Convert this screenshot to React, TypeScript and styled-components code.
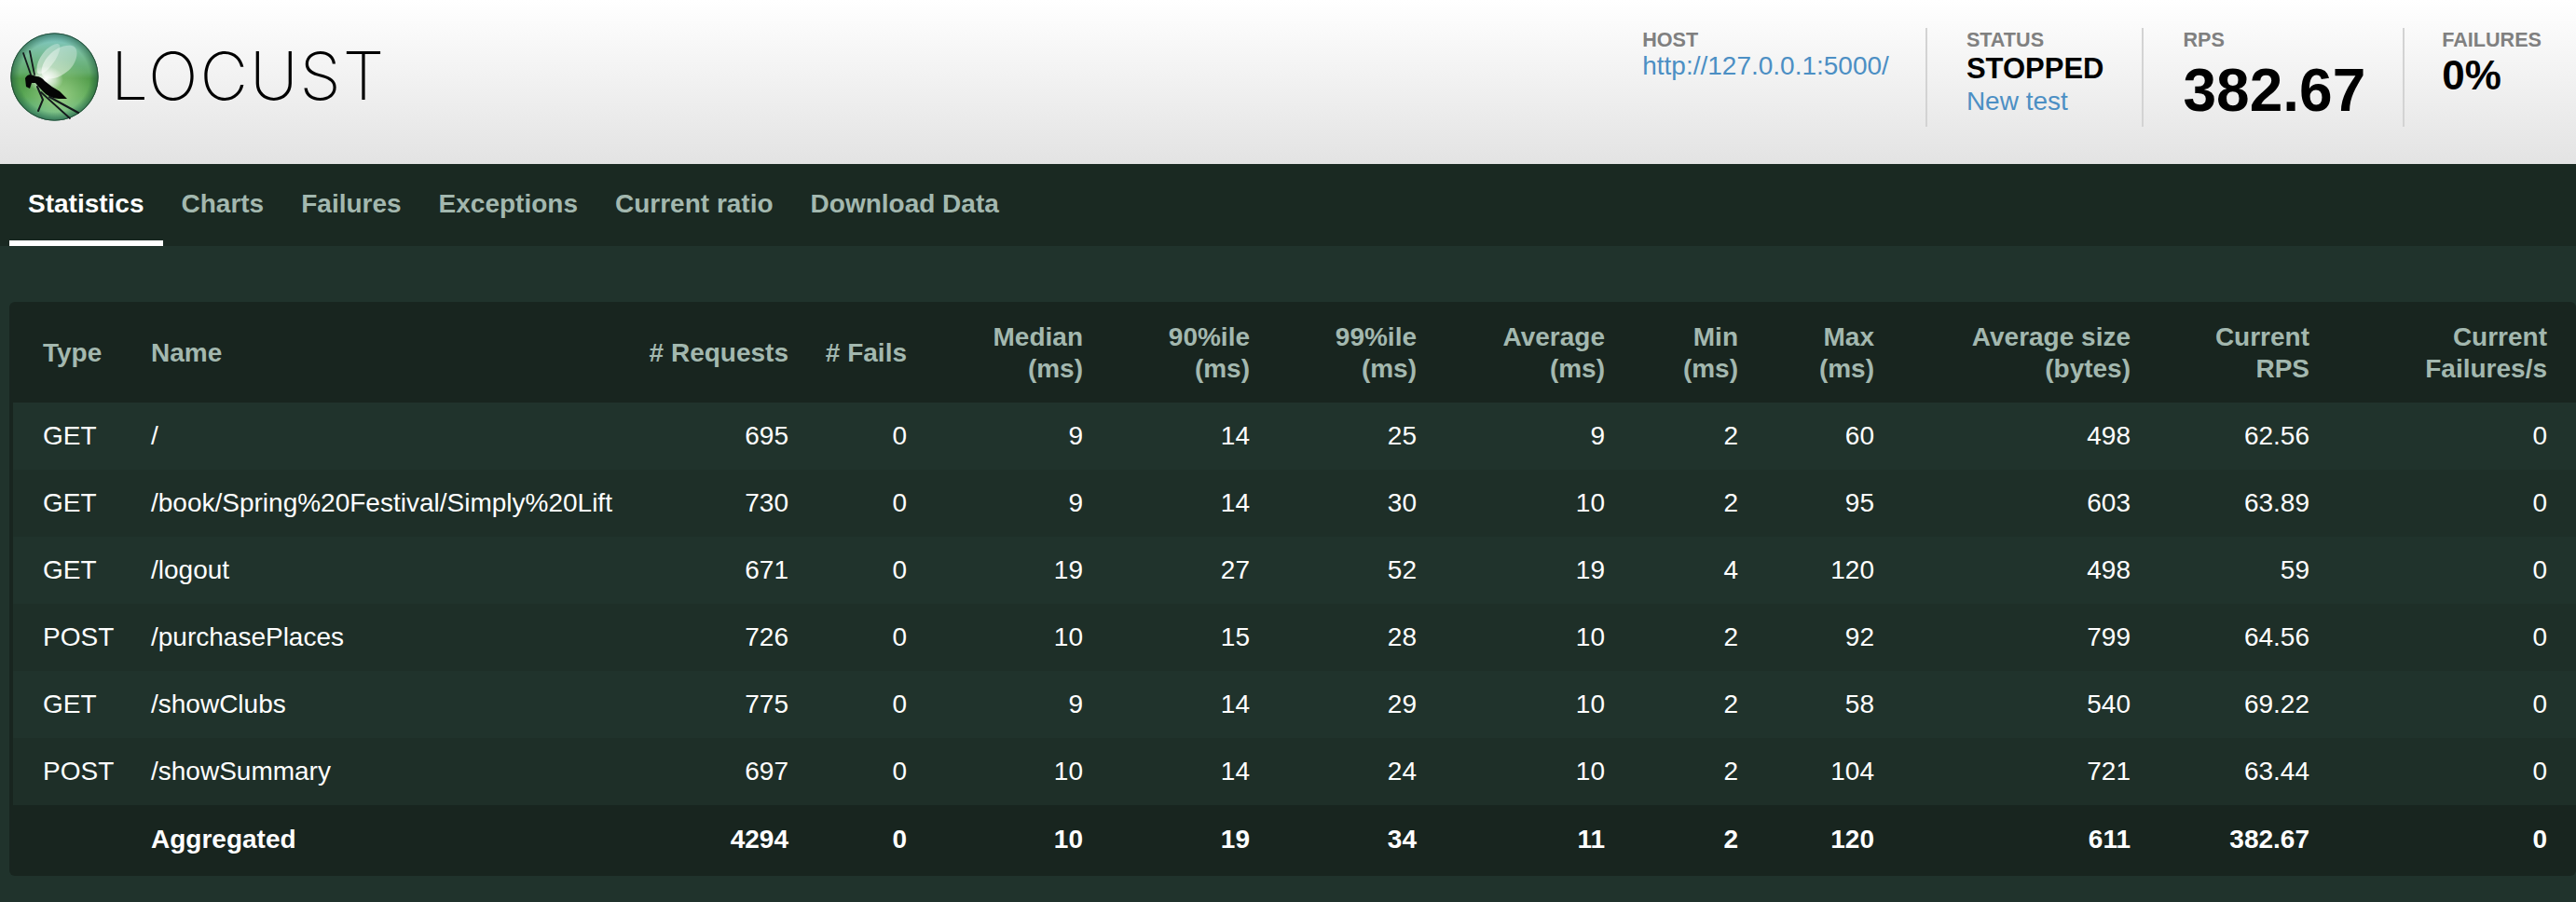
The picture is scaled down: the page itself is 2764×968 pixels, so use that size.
import React from "react";
import styled, { createGlobalStyle } from "styled-components";

const Global = createGlobalStyle`
  html, body { margin: 0; padding: 0; background: #20332c; }
  body { font-family: "Liberation Sans", Arial, sans-serif; }
  * { box-sizing: border-box; }
`;

const Page = styled.div`
  width: 2764px;
  height: 968px;
  overflow: hidden;
  background: #20332c;
`;

const Header = styled.header`
  height: 176px;
  display: flex;
  justify-content: space-between;
  background: linear-gradient(to bottom, #ffffff 0%, #e3e3e3 100%);
`;

const Brand = styled.div`
  display: flex;
  align-items: flex-start;
  padding: 35px 0 0 11px;
`;

const Wordmark = styled.span`
  margin: 3px 0 0 12px;
  font-family: "Inter", sans-serif;
  font-weight: 200;
  font-size: 71px;
  line-height: 86px;
  letter-spacing: 2px;
  color: #000;
`;

const Stats = styled.div`
  display: flex;
  align-items: flex-start;
  padding: 30px 37px 0 0;
`;

const Stat = styled.div<{ $left: number; $right: number; $last?: boolean }>`
  height: 106px;
  padding: 0 ${(p) => p.$right}px 0 ${(p) => p.$left}px;
  border-right: ${(p) => (p.$last ? "none" : "2px solid #d3d3d3")};
`;

const Label = styled.div`
  font-size: 21.6px;
  line-height: 24px;
  font-weight: 700;
  color: #808080;
  margin-top: 1px;
`;

const Link = styled.a`
  display: block;
  font-size: 28px;
  line-height: 32px;
  color: #4c8fc4;
`;

const StatusValue = styled.div`
  font-size: 31px;
  line-height: 38px;
  font-weight: 700;
  color: #000;
`;

const BigValue = styled.div<{ $size: number; $top: number }>`
  font-size: ${(p) => p.$size}px;
  line-height: ${(p) => p.$size + 4}px;
  margin-top: ${(p) => p.$top}px;
  font-weight: 700;
  color: #000;
`;

const Nav = styled.nav`
  height: 88px;
  display: flex;
  padding-left: 10px;
  background: #1a2922;
`;

const Tab = styled.a<{ $active?: boolean }>`
  display: block;
  height: 88px;
  padding: 0 20px;
  line-height: 86px;
  font-size: 28px;
  font-weight: 700;
  color: ${(p) => (p.$active ? "#ffffff" : "#a3b8af")};
  border-bottom: 6px solid ${(p) => (p.$active ? "#ffffff" : "transparent")};
`;

const Main = styled.main`
  padding: 60px 0 0 10px;
`;

const TableBox = styled.div`
  width: 2754px;
  height: 616px;
  padding-left: 4px;
  background: #18251f;
  border-radius: 6px;
  overflow: hidden;
`;

const Table = styled.table`
  width: 2750px;
  table-layout: fixed;
  border-collapse: collapse;
  font-size: 28px;
`;

const Col = styled.col<{ $w: number }>`
  width: ${(p) => p.$w}px;
`;

const HeadRow = styled.tr`
  height: 108px;
`;

const Th = styled.th<{ $left?: boolean; $first?: boolean }>`
  padding: 2px 31px 0 ${(p) => (p.$first ? 32 : 0)}px;
  line-height: 34px;
  font-weight: 700;
  white-space: nowrap;
  color: #a3b8af;
  text-align: ${(p) => (p.$left ? "left" : "right")};
`;

const Row = styled.tr<{ $alt: boolean }>`
  height: 72px;
  background: ${(p) => (p.$alt ? "#1e2f28" : "#20332c")};
`;

const TotalRow = styled.tr`
  height: 76px;
  font-weight: 700;
`;

const Td = styled.td<{ $left?: boolean; $first?: boolean }>`
  padding: 0 31px 0 ${(p) => (p.$first ? 32 : 0)}px;
  color: #ffffff;
  white-space: nowrap;
  text-align: ${(p) => (p.$left ? "left" : "right")};
`;

const TotalTd = styled(Td)`
  padding-bottom: 3px;
`;

const LogoMark = () => (
  <svg width="96" height="96" viewBox="0 0 96 96">
    <defs>
      <linearGradient id="ball" x1="0" y1="0" x2="0" y2="1">
        <stop offset="0%" stopColor="#7fc9cf" />
        <stop offset="18%" stopColor="#7cc0a4" />
        <stop offset="45%" stopColor="#63ab6a" />
        <stop offset="52%" stopColor="#4f9a48" />
        <stop offset="72%" stopColor="#58a654" />
        <stop offset="90%" stopColor="#5bb080" />
        <stop offset="100%" stopColor="#4aa28c" />
      </linearGradient>
      <radialGradient id="lower" cx="55%" cy="72%" r="42%">
        <stop offset="0%" stopColor="#9fd28a" stopOpacity="0.9" />
        <stop offset="100%" stopColor="#9fd28a" stopOpacity="0" />
      </radialGradient>
      <radialGradient id="rim" cx="50%" cy="50%" r="50%">
        <stop offset="80%" stopColor="#1e5a3c" stopOpacity="0" />
        <stop offset="100%" stopColor="#1e5a3c" stopOpacity="0.65" />
      </radialGradient>
      <radialGradient id="glow" cx="50%" cy="50%" r="50%">
        <stop offset="0%" stopColor="#ffffff" stopOpacity="1" />
        <stop offset="55%" stopColor="#ffffff" stopOpacity="0.55" />
        <stop offset="100%" stopColor="#ffffff" stopOpacity="0" />
      </radialGradient>
      <linearGradient id="wing" x1="0" y1="1" x2="1" y2="0">
        <stop offset="0%" stopColor="#ffffff" stopOpacity="0.95" />
        <stop offset="100%" stopColor="#ffffff" stopOpacity="0.4" />
      </linearGradient>
    </defs>
    <circle cx="47.5" cy="47.5" r="47" fill="url(#ball)" />
    <circle cx="47.5" cy="47.5" r="47" fill="url(#lower)" />
    <circle cx="47.5" cy="47.5" r="47" fill="url(#rim)" />
    <circle cx="47.5" cy="47.5" r="46.7" fill="none" stroke="#1f4030" strokeWidth="0.8" />
    <path d="M29 43 C 26 32 38 14 50 12 C 57 11 52 26 45 34 C 40 41 33 47 29 43 Z" fill="url(#wing)" opacity="0.6" />
    <path d="M34 45 C 31 32 48 12 66 14 C 76 16 72 36 58 44 C 50 50 38 52 34 45 Z" fill="url(#wing)" opacity="0.65" />
    <ellipse cx="38" cy="50" rx="19" ry="14" fill="url(#glow)" />
    <path d="M16 49 Q 18 45 22 45 L 28 47 Q 33 47 37 52 Q 45 59 53 63 L 61 71 L 52 71 Q 41 70 35 63 Q 30 58 27 54 L 23 54 L 21 60 L 17 58 Z" fill="#050505" />
    <g fill="none" stroke="#141a1c" strokeLinecap="round">
      <path d="M22 45 L 14 22" strokeWidth="1.8" />
      <path d="M26 45 L 21 20" strokeWidth="1.8" />
      <path d="M29 58 L 35 72 L 30 84" strokeWidth="2" />
      <path d="M33 64 L 64 92" strokeWidth="1.8" />
      <path d="M42 69 L 73 86" strokeWidth="2" />
    </g>
  </svg>
);

const columns = [148, 498, 217, 127, 189, 179, 179, 202, 143, 146, 275, 192, 255];
const heads: [string, string?][] = [
  ["Type"], ["Name"], ["# Requests"], ["# Fails"], ["Median", "(ms)"], ["90%ile", "(ms)"], ["99%ile", "(ms)"],
  ["Average", "(ms)"], ["Min", "(ms)"], ["Max", "(ms)"], ["Average size", "(bytes)"], ["Current", "RPS"], ["Current", "Failures/s"],
];
const rows = [
  ["GET", "/", "695", "0", "9", "14", "25", "9", "2", "60", "498", "62.56", "0"],
  ["GET", "/book/Spring%20Festival/Simply%20Lift", "730", "0", "9", "14", "30", "10", "2", "95", "603", "63.89", "0"],
  ["GET", "/logout", "671", "0", "19", "27", "52", "19", "4", "120", "498", "59", "0"],
  ["POST", "/purchasePlaces", "726", "0", "10", "15", "28", "10", "2", "92", "799", "64.56", "0"],
  ["GET", "/showClubs", "775", "0", "9", "14", "29", "10", "2", "58", "540", "69.22", "0"],
  ["POST", "/showSummary", "697", "0", "10", "14", "24", "10", "2", "104", "721", "63.44", "0"],
];
const total = ["", "Aggregated", "4294", "0", "10", "19", "34", "11", "2", "120", "611", "382.67", "0"];
const tabs = ["Statistics", "Charts", "Failures", "Exceptions", "Current ratio", "Download Data"];

export default function App() {
  return (
    <Page>
      <Global />
      <Header>
        <Brand>
          <LogoMark />
          <Wordmark>LOCUST</Wordmark>
        </Brand>
        <Stats>
          <Stat $left={42} $right={39}>
            <Label>HOST</Label>
            <Link>http://127.0.0.1:5000/</Link>
          </Stat>
          <Stat $left={42} $right={41}>
            <Label>STATUS</Label>
            <StatusValue>STOPPED</StatusValue>
            <Link>New test</Link>
          </Stat>
          <Stat $left={42} $right={40}>
            <Label>RPS</Label>
            <BigValue $size={64} $top={8}>382.67</BigValue>
          </Stat>
          <Stat $left={40} $right={0} $last>
            <Label>FAILURES</Label>
            <BigValue $size={44} $top={2}>0%</BigValue>
          </Stat>
        </Stats>
      </Header>
      <Nav>
        {tabs.map((t, i) => (
          <Tab key={t} $active={i === 0}>{t}</Tab>
        ))}
      </Nav>
      <Main>
        <TableBox>
          <Table>
            <colgroup>
              {columns.map((w, i) => (
                <Col key={i} $w={w} />
              ))}
            </colgroup>
            <thead>
              <HeadRow>
                {heads.map(([a, b], i) => (
                  <Th key={a + i} $left={i < 2} $first={i === 0}>
                    {a}
                    {b ? <br /> : null}
                    {b}
                  </Th>
                ))}
              </HeadRow>
            </thead>
            <tbody>
              {rows.map((r, ri) => (
                <Row key={ri} $alt={ri % 2 === 1}>
                  {r.map((c, i) => (
                    <Td key={i} $left={i < 2} $first={i === 0}>{c}</Td>
                  ))}
                </Row>
              ))}
              <TotalRow>
                {total.map((c, i) => (
                  <TotalTd key={i} $left={i < 2} $first={i === 0}>{c}</TotalTd>
                ))}
              </TotalRow>
            </tbody>
          </Table>
        </TableBox>
      </Main>
    </Page>
  );
}
